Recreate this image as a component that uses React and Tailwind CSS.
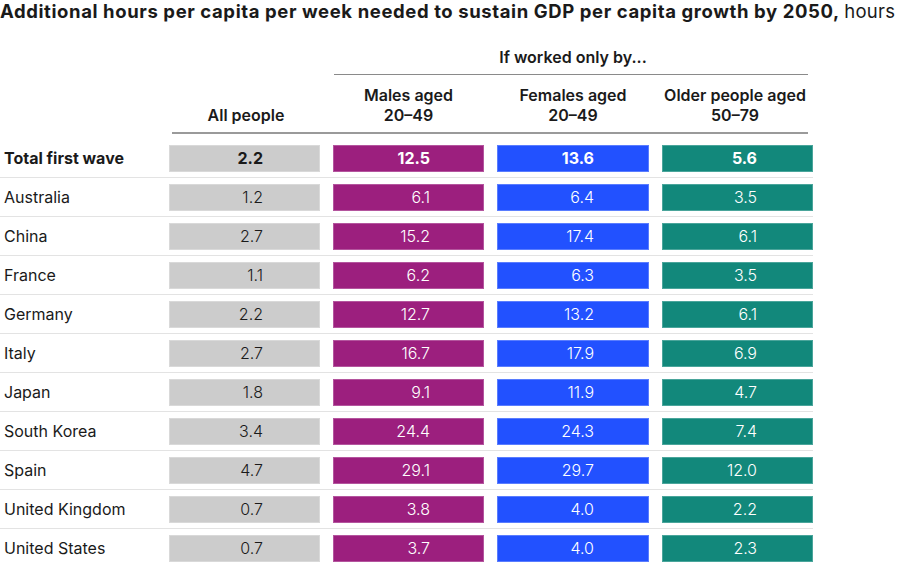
const rows = [
  { name: 'Total first wave', v: ['2.2', '12.5', '13.6', '5.6'], bold: true },
  { name: 'Australia', v: ['1.2', '6.1', '6.4', '3.5'] },
  { name: 'China', v: ['2.7', '15.2', '17.4', '6.1'] },
  { name: 'France', v: ['1.1', '6.2', '6.3', '3.5'] },
  { name: 'Germany', v: ['2.2', '12.7', '13.2', '6.1'] },
  { name: 'Italy', v: ['2.7', '16.7', '17.9', '6.9'] },
  { name: 'Japan', v: ['1.8', '9.1', '11.9', '4.7'] },
  { name: 'South Korea', v: ['3.4', '24.4', '24.3', '7.4'] },
  { name: 'Spain', v: ['4.7', '29.1', '29.7', '12.0'] },
  { name: 'United Kingdom', v: ['0.7', '3.8', '4.0', '2.2'] },
  { name: 'United States', v: ['0.7', '3.7', '4.0', '2.3'] },
]

// numbers sit right-aligned, about 55px in from each cell's right edge
const cellColors = [
  'bg-[#cccccc] text-[#1a1a1a] border-[#d9d9d9] pr-[56px]',
  'bg-[#9c1f7e] text-white border-[#b4559e] pr-[53px]',
  'bg-[#2251ff] text-white border-[#5a7dff] pr-[54px]',
  'bg-[#12887b] text-white border-[#4aa59b] pr-[55px]',
]

const grid = 'grid grid-cols-[156px_151px_151px_152px_151px] gap-x-[13px]'

export default function App() {
  return (
    <div className="w-[900px] h-[567px] bg-white overflow-hidden text-[#1a1a1a] font-['Inter','Liberation_Sans',sans-serif]">
      <h1 className="text-[18.5px] leading-[23px] font-bold whitespace-nowrap tracking-[0.6px]">
        Additional hours per capita per week needed to sustain GDP per capita growth by 2050,{' '}
        <span className="font-normal tracking-[0.3px]">hours</span>
      </h1>

      <div className="w-[813px] mt-[24px]">
        <div className={grid}>
          <div className="col-start-3 col-span-3 flex flex-col">
            <div className="text-[16px] leading-[20px] font-semibold text-center">If worked only by...</div>
            <div className="mt-[7px] ml-[1px] mr-[5px] h-px bg-[#8a8a8a]" />
          </div>
        </div>

        <div className={grid + ' mt-[10px] items-end font-semibold'}>
          <div />
          <div className="text-[16px] leading-[20px] text-center pl-[3px]">All people</div>
          <div className="text-[16px] leading-[20px] text-center">Males aged<br />20–49</div>
          <div className="text-[16px] leading-[20px] text-center">Females aged<br />20–49</div>
          <div className="text-[16px] leading-[20px] text-center pr-[5px]">Older people aged<br />50–79</div>
        </div>
        <div className="mt-[7px] ml-[172px] mr-[5px] h-[2px] bg-[#9a9a9a]" />

        <div className="mt-[5px]">
          {rows.map((r, i) => (
            <div
              key={r.name}
              className={grid + ' items-center pt-[6px] pb-[5px] ' + (i < rows.length - 1 ? 'border-b border-[#e3e3e3]' : '')}
            >
              <div className={'pl-[4px] text-[16px] leading-[19px] pb-[1px] whitespace-nowrap ' + (r.bold ? 'font-bold' : '')}>
                {r.name}
              </div>
              {r.v.map((v, j) => (
                <div
                  key={j}
                  className={'h-[27px] border flex items-center justify-end pb-[1px] text-[16px] ' + cellColors[j] + (r.bold ? ' font-bold' : ' font-light')}
                >
                  {v}
                </div>
              ))}
            </div>
          ))}
        </div>
      </div>
    </div>
  )
}
